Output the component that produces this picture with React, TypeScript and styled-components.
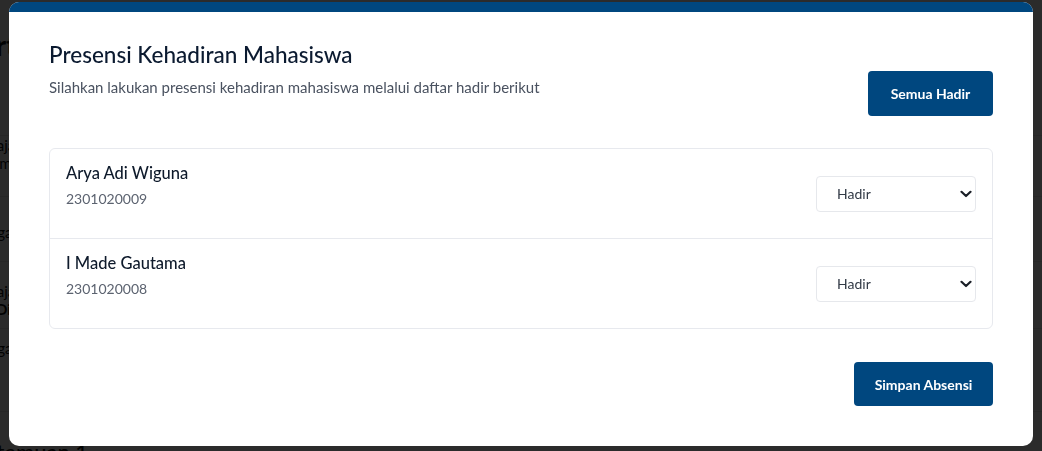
import React from "react";
import styled, { createGlobalStyle } from "styled-components";

const GlobalStyle = createGlobalStyle`
  html, body { margin: 0; padding: 0; }
  body {
    font-family: Lato, "Noto Sans", "Liberation Sans", sans-serif;
    background: #ffffff;
    overflow: hidden;
  }
  * { box-sizing: border-box; }
`;

const BRAND = "#00477f";

/* ---------- page behind the dialog ---------- */
const Page = styled.div`
  width: 1042px;
  height: 451px;
  overflow: hidden;
  background: #ffffff;
  color: #111111;
`;

const PageInner = styled.div`
  margin-left: -36px;
  display: flex;
  flex-direction: column;
`;

const PageHeading = styled.div`
  height: 136px;
  padding-top: 28px;
  font-size: 28px;
  font-weight: 700;
  border-bottom: 1px solid #e5e5e5;
`;

const PageText = styled.div<{ $bold?: boolean }>`
  font-size: 15px;
  line-height: 18px;
  font-weight: ${(p) => (p.$bold ? 700 : 400)};
`;

const PageBlock = styled.div<{ $h: number; $pad?: number }>`
  height: ${(p) => p.$h}px;
  padding-top: ${(p) => p.$pad ?? 0}px;
  border-bottom: 1px solid #e5e5e5;
`;

const PageFooterTitle = styled.div`
  font-size: 22px;
  font-weight: 500;
  padding-top: 26px;
`;

/* ---------- overlay + dialog ---------- */
const Overlay = styled.div`
  position: fixed;
  inset: 0;
  background: rgba(0, 0, 0, 0.83);
  display: flex;
  justify-content: center;
  align-items: flex-start;
  padding-top: 2px;
`;

const Dialog = styled.div`
  width: 1024px;
  height: 444px;
  background: #ffffff;
  border-radius: 10px;
  overflow: hidden;
  display: flex;
  flex-direction: column;
`;

const TopStrip = styled.div`
  height: 10px;
  background: ${BRAND};
  flex-shrink: 0;
`;

const Body = styled.div`
  padding: 28px 40px 40px;
  display: flex;
  flex-direction: column;
`;

const Header = styled.div`
  display: flex;
  justify-content: space-between;
  align-items: flex-start;
`;

const HeaderText = styled.div`
  display: flex;
  flex-direction: column;
`;

const Title = styled.h2`
  margin: 0;
  font-size: 22.5px;
  line-height: 30px;
  font-weight: 500;
  color: #0b1a30;
`;

const Subtitle = styled.p`
  margin: 7px 0 0;
  font-size: 15px;
  line-height: 20px;
  color: #4a5260;
`;

const PrimaryButton = styled.button<{ $w: number; $h: number }>`
  width: ${(p) => p.$w}px;
  height: ${(p) => p.$h}px;
  border: none;
  border-radius: 4px;
  background: ${BRAND};
  color: #ffffff;
  font-family: inherit;
  font-size: 14px;
  font-weight: 700;
  cursor: pointer;
  flex-shrink: 0;
`;

const HeaderButton = styled(PrimaryButton)`
  margin-top: 31px;
`;

const List = styled.div`
  margin-top: 32px;
  border: 1px solid #e7e9ee;
  border-radius: 6px;
  display: flex;
  flex-direction: column;
`;

const Row = styled.div`
  height: 90px;
  padding: 12px 16px 0 16px;
  display: flex;
  justify-content: space-between;
  align-items: flex-start;
  & + & {
    border-top: 1px solid #e7e9ee;
  }
  &:first-child {
    height: 89px;
  }
`;

const Info = styled.div`
  display: flex;
  flex-direction: column;
`;

const Name = styled.div`
  font-size: 16.5px;
  line-height: 24px;
  font-weight: 500;
  color: #0e1a2b;
`;

const Nim = styled.div`
  margin-top: 4px;
  font-size: 14px;
  line-height: 20px;
  color: #5c6370;
`;

const SelectWrap = styled.div`
  position: relative;
  width: 160px;
  height: 36px;
  align-self: center;
  margin-top: -12px;
`;

const Select = styled.select`
  appearance: none;
  -webkit-appearance: none;
  width: 100%;
  height: 100%;
  border: 1px solid #e6e8ec;
  border-radius: 4px;
  background: #ffffff;
  padding: 0 24px 0 20px;
  font-family: inherit;
  font-size: 14px;
  color: #323a46;
  outline: none;
`;

const Chevron = styled.svg`
  position: absolute;
  right: 4px;
  top: 50%;
  transform: translateY(-50%);
  pointer-events: none;
`;

const Footer = styled.div`
  margin-top: 33px;
  display: flex;
  justify-content: flex-end;
`;

const students = [
  { name: "Arya Adi Wiguna", nim: "2301020009" },
  { name: "I Made Gautama", nim: "2301020008" },
];

export default function App() {
  return (
    <>
      <GlobalStyle />
      <Page>
        <PageInner>
          <PageHeading>Pertemuan Ruang</PageHeading>
          <PageBlock $h={61} $pad={0}>
            <PageText>Pengajar</PageText>
            <PageText>Pertemuan</PageText>
          </PageBlock>
          <PageBlock $h={65} $pad={26}>
            <PageText>Ruangan</PageText>
          </PageBlock>
          <PageBlock $h={67} $pad={20}>
            <PageText>Pengajar</PageText>
            <PageText $bold>Hari Ditentukan:</PageText>
          </PageBlock>
          <PageBlock $h={83} $pad={10}>
            <PageText>Ruangan</PageText>
          </PageBlock>
          <PageFooterTitle>Pertemuan 1</PageFooterTitle>
        </PageInner>
      </Page>
      <Overlay>
        <Dialog>
          <TopStrip />
          <Body>
            <Header>
              <HeaderText>
                <Title>Presensi Kehadiran Mahasiswa</Title>
                <Subtitle>
                  Silahkan lakukan presensi kehadiran mahasiswa melalui daftar hadir berikut
                </Subtitle>
              </HeaderText>
              <HeaderButton $w={125} $h={45}>Semua Hadir</HeaderButton>
            </Header>
            <List>
              {students.map((s) => (
                <Row key={s.nim}>
                  <Info>
                    <Name>{s.name}</Name>
                    <Nim>{s.nim}</Nim>
                  </Info>
                  <SelectWrap>
                    <Select defaultValue="Hadir">
                      <option>Hadir</option>
                      <option>Izin</option>
                      <option>Sakit</option>
                      <option>Alpa</option>
                    </Select>
                    <Chevron width="12" height="8" viewBox="0 0 12 8">
                      <path
                        d="M1.5 1.8 L6 6 L10.5 1.8"
                        fill="none"
                        stroke="#1a1f27"
                        strokeWidth="2.2"
                        strokeLinecap="round"
                        strokeLinejoin="round"
                      />
                    </Chevron>
                  </SelectWrap>
                </Row>
              ))}
            </List>
            <Footer>
              <PrimaryButton $w={139} $h={44}>Simpan Absensi</PrimaryButton>
            </Footer>
          </Body>
        </Dialog>
      </Overlay>
    </>
  );
}
